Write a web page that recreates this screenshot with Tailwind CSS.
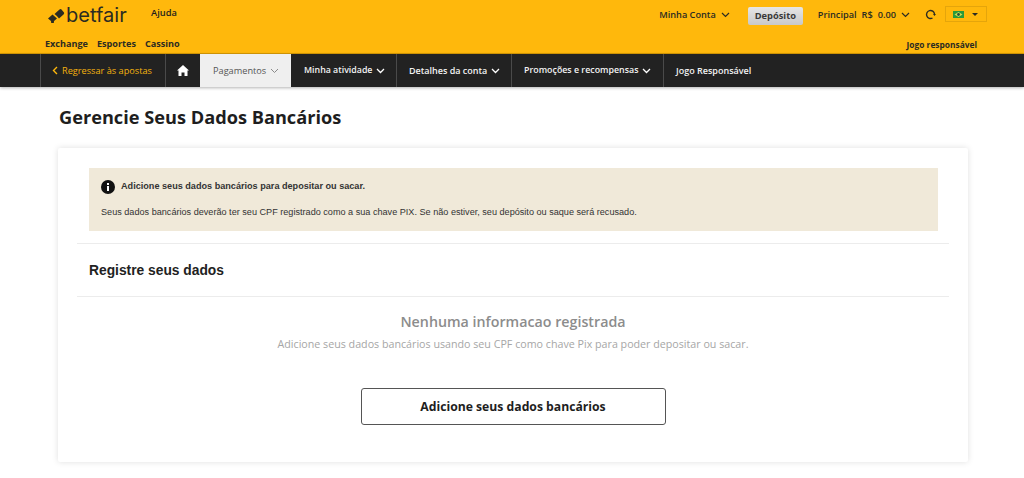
<!DOCTYPE html>
<html lang="pt-BR">
<head>
  <meta charset="UTF-8" />
  <title>Gerencie Seus Dados Bancários</title>
  <script src="https://cdn.jsdelivr.net/npm/@tailwindcss/browser@4"></script>
</head>
<body class="bg-white font-['Open_Sans',sans-serif] h-[478px] overflow-hidden text-[#1e1e1e]">

  <!-- Header -->
  <header class="h-[54px] bg-[#ffb80c] flex justify-between pl-[45px] pr-[47px] border-b border-[#d99a05]">
    <div>
      <div class="h-[37px] flex items-start">
        <div class="flex items-center mt-[4px] ml-[3px] w-[103px]">
          <svg width="18" height="15" viewBox="0 0 18 15" class="fill-[#2b2b22] shrink-0">
            <path d="M0 10.5 L4.5 6.5 L9 10.5 L6 13 L5.8 15 L3.2 15 L3 13 Z"/>
            <path d="M6.5 6 L11.5 1.5 Q12.5 0.5 13.5 1.5 L16 4.5 Q16.5 5.5 15.5 6.5 L11 10.5 Q9 7.5 6.5 6 Z"/>
          </svg>
          <span class="text-[20px] leading-[22px] text-[#2b2b22] font-['Inter',sans-serif]">betfair</span>
        </div>
        <a class="text-[9.3px] font-semibold leading-[14px] mt-[6px]">Ajuda</a>
      </div>
      <nav class="flex gap-[9px] text-[9.1px] font-bold leading-[14px] text-[#2b2b22]">
        <a>Exchange</a>
        <a>Esportes</a>
        <a>Cassino</a>
      </nav>
    </div>
    <div class="flex flex-col items-end">
      <div class="h-[37px] flex items-start text-[9.2px] font-semibold text-[#2b2b22] pt-[7px] -mr-[10px]">
        <a class="flex items-center gap-[5px] h-[16px]">Minha Conta
          <svg width="9" height="6" viewBox="0 0 9 6" class="fill-none stroke-[#2b2b22] stroke-[1.2]"><path d="M1 1 L4.5 4.5 L8 1"/></svg>
        </a>
        <button class="ml-[18px] w-[55px] h-[18px] rounded-[2px] bg-gradient-to-b from-[#e6e6e6] to-[#c9c9c9] text-[9.3px] font-bold text-[#3a3a3a]">Depósito</button>
        <a class="ml-[15px] flex items-center h-[16px]">Principal<span class="ml-[5px]">R$</span><span class="ml-[5px]">0.00</span>
          <svg width="9" height="6" viewBox="0 0 9 6" class="ml-[5px] fill-none stroke-[#2b2b22] stroke-[1.2]"><path d="M1 1 L4.5 4.5 L8 1"/></svg>
        </a>
        <svg width="11" height="11" viewBox="0 0 11 11" class="ml-[15px] mt-[2px] fill-none stroke-[#2b2b22] stroke-[1.4]"><path d="M7.5 9 A4 4 0 1 1 9.5 5"/><path d="M8 5 L11 5 L9.5 7 Z" class="fill-[#2b2b22] stroke-none"/></svg>
        <div class="ml-[9px] -mt-[1px] w-[42px] h-[16px] border border-[#e5a50b] flex items-center pl-[7px] gap-[8px]">
          <svg width="11" height="7" viewBox="0 0 11 7"><rect width="11" height="7" fill="#2a9a3c"/><path d="M5.5 1 L9.5 3.5 L5.5 6 L1.5 3.5 Z" fill="#c9dc55"/><circle cx="5.5" cy="3.5" r="1.4" fill="#26503f"/></svg>
          <span class="w-0 h-0 border-x-[3px] border-x-transparent border-t-[3px] border-t-[#2b2b22]"></span>
        </div>
      </div>
      <a class="text-[8.4px] font-bold leading-[14px] mt-[1px] text-[#2b2b22]">Jogo responsável</a>
    </div>
  </header>

  <!-- Menu -->
  <nav class="h-[33px] bg-[#222222] flex pl-[40px] text-[9px] font-semibold text-[#f2f2f2] shadow-[0_1px_3px_rgba(0,0,0,0.3)]">
    <a class="border-x border-[#4a4a4a] w-[126px] flex items-center pl-[11px] gap-[4px] text-[#f5b20e] font-normal text-[9.2px]">
      <svg width="6" height="9" viewBox="0 0 6 9" class="fill-none stroke-[#ffb80c] stroke-[1.4]"><path d="M5 1 L1.5 4.5 L5 8"/></svg>
      Regressar às apostas
    </a>
    <a class="w-[34px] flex items-center justify-center">
      <svg width="12" height="11" viewBox="0 0 12 11" class="fill-white"><path d="M6 0 L12 5.5 L10.5 5.5 L10.5 11 L7.5 11 L7.5 7.5 L4.5 7.5 L4.5 11 L1.5 11 L1.5 5.5 L0 5.5 Z"/></svg>
    </a>
    <a class="w-[91px] bg-[#efefef] text-[#555555] font-normal text-[9.2px] flex items-center pl-[13px] gap-[4px]">
      Pagamentos
      <svg width="9" height="6" viewBox="0 0 9 6" class="fill-none stroke-[#8a8a8a] stroke-[1]"><path d="M1 1 L4.5 4.5 L8 1"/></svg>
    </a>
    <a class="w-[106px] border-r border-[#4a4a4a] flex items-center pl-[13px] pt-[1px] gap-[4px] text-[8.8px]">
      Minha atividade
      <svg width="9" height="6" viewBox="0 0 9 6" class="fill-none stroke-white stroke-[1.3]"><path d="M1 1 L4.5 4.5 L8 1"/></svg>
    </a>
    <a class="w-[115px] border-r border-[#4a4a4a] flex items-center pl-[12px] gap-[4px]">
      Detalhes da conta
      <svg width="9" height="6" viewBox="0 0 9 6" class="fill-none stroke-white stroke-[1.3]"><path d="M1 1 L4.5 4.5 L8 1"/></svg>
    </a>
    <a class="w-[152px] border-r border-[#4a4a4a] flex items-center pl-[12px] pt-[1px] gap-[4px] whitespace-nowrap text-[8.85px]">
      Promoções e recompensas
      <svg width="9" height="6" viewBox="0 0 9 6" class="fill-none stroke-white stroke-[1.3]"><path d="M1 1 L4.5 4.5 L8 1"/></svg>
    </a>
    <a class="flex items-center pl-[12px]">Jogo Responsável</a>
  </nav>

  <!-- Main -->
  <main class="px-[58px]">
    <h1 class="text-[18.2px] font-bold leading-[24px] mt-[18px] ml-[1px] mb-[19px] text-[#1e1e1e]">Gerencie Seus Dados Bancários</h1>

    <section class="w-[910px] h-[314px] bg-white shadow-[0_0_6px_rgba(0,0,0,0.13)] rounded-[2px] px-[19px] pt-[20px]">
      <div class="mx-[12px] w-[849px] h-[63px] bg-[#f0e9d9] pl-[12px] pt-[11px] font-['Liberation_Sans',sans-serif] text-[9.12px] text-[#333333]">
        <div class="flex items-center gap-[6px] h-[16px]">
          <svg width="14" height="14" viewBox="0 0 14 14"><circle cx="7" cy="7" r="7" fill="#111111"/><rect x="6" y="6" width="2" height="5" fill="white"/><rect x="6" y="3" width="2" height="2" fill="white"/></svg>
          <span class="font-bold">Adicione seus dados bancários para depositar ou sacar.</span>
        </div>
        <p class="mt-[11px] leading-[12px]">Seus dados bancários deverão ter seu CPF registrado como a sua chave PIX. Se não estiver, seu depósito ou saque será recusado.</p>
      </div>

      <div class="mt-[12px] h-[54px] pt-[2px] border-y border-[#ececec] flex items-center pl-[12px] font-['Liberation_Sans',sans-serif] text-[13.8px] font-bold text-[#222222]">Registre seus dados</div>

      <div class="flex flex-col items-center">
        <h2 class="mt-[15px] text-[14.25px] leading-[20px] font-semibold text-[#8c8c8c]">Nenhuma informacao registrada</h2>
        <p class="mt-[5px] text-[10.7px] leading-[14px] text-[#a6a6a6]">Adicione seus dados bancários usando seu CPF como chave Pix para poder depositar ou sacar.</p>
        <button class="mt-[37px] w-[305px] h-[37px] pt-[1px] border border-[#555555] rounded-[3px] text-[12.2px] font-bold text-[#1e1e1e]">Adicione seus dados bancários</button>
      </div>
    </section>
  </main>
</body>
</html>
